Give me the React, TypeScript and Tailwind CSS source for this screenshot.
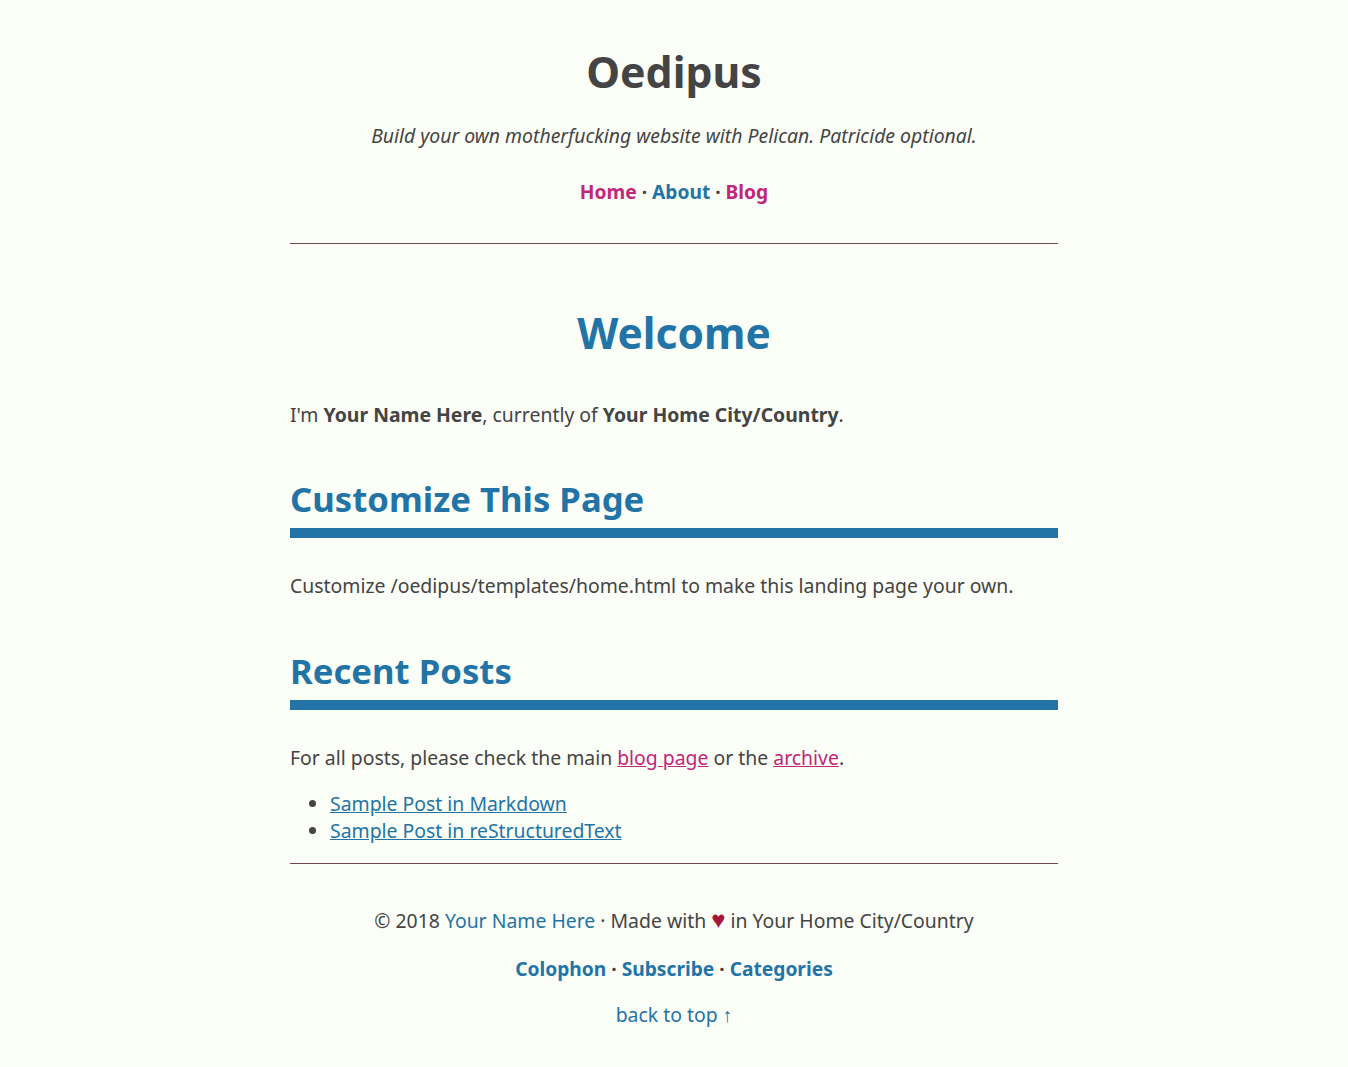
const blue = "text-[#2374a6]";

export default function App() {
  return (
    <div
      className="min-h-screen bg-[#fbfdf7] text-[#444] text-[19.4px] leading-[27px]"
      style={{ fontFamily: "'Noto Sans', 'Open Sans', sans-serif" }}
    >
      <div className="w-[768px] mx-auto pt-[40px] pb-[30px]">
        {/* header */}
        <header className="text-center">
          <h1 className="text-[42.8px] font-bold leading-[64px] text-[#444]">Oedipus</h1>
          <p className="italic mt-[18px]">Build your own motherfucking website with Pelican. Patricide optional.</p>
          <nav className="mt-[29px] font-bold text-[19.2px]">
            <a href="#" className="text-[#c1267a]">Home</a>
            <span> · </span>
            <a href="#" className={blue}>About</a>
            <span> · </span>
            <a href="#" className="text-[#c1267a]">Blog</a>
          </nav>
        </header>

        <hr className="mt-[38px] border-0 border-t border-[#6e4750]" />

        <main>
          <h2 className={`text-center text-[42.5px] font-bold mt-[59px] leading-[60px] ${blue}`}>Welcome</h2>
          <p className="mt-[38px]">
            I'm <strong>Your Name Here</strong>, currently of <strong>Your Home City/Country</strong>.
          </p>

          <h3 className={`mt-[47px] text-[34.7px] font-bold leading-[48px] pb-[5px] border-b-[10px] border-[#2374a6] ${blue}`}>
            Customize This Page
          </h3>
          <p className="mt-[34px]">Customize /oedipus/templates/home.html to make this landing page your own.</p>

          <h3 className={`mt-[48px] text-[34.7px] font-bold leading-[48px] pb-[5px] border-b-[10px] border-[#2374a6] ${blue}`}>
            Recent Posts
          </h3>
          <p className="mt-[34px]">
            For all posts, please check the main{" "}
            <a href="#" className="text-[#c1267a] underline">blog page</a> or the{" "}
            <a href="#" className="text-[#c1267a] underline">archive</a>.
          </p>
          <ul className="mt-[19px] list-disc pl-[40px]">
            <li><a href="#" className={`underline ${blue}`}>Sample Post in Markdown</a></li>
            <li><a href="#" className={`underline ${blue}`}>Sample Post in reStructuredText</a></li>
          </ul>
        </main>

        <hr className="mt-[19px] border-0 border-t border-[#6e4750]" />

        <footer className="text-center">
          <p className="mt-[43px]">
            © 2018 <a href="#" className={blue}>Your Name Here</a> · Made with{" "}
            <span className="text-[#a4173a] text-[24px] leading-none">♥</span> in Your Home City/Country
          </p>
          <p className="mt-[21px] font-bold text-[19.2px]">
            <a href="#" className={blue}>Colophon</a>
            <span> · </span>
            <a href="#" className={blue}>Subscribe</a>
            <span> · </span>
            <a href="#" className={blue}>Categories</a>
          </p>
          <p className="mt-[19px]">
            <a href="#" className={blue}>back to top ↑</a>
          </p>
        </footer>
      </div>
    </div>
  );
}
